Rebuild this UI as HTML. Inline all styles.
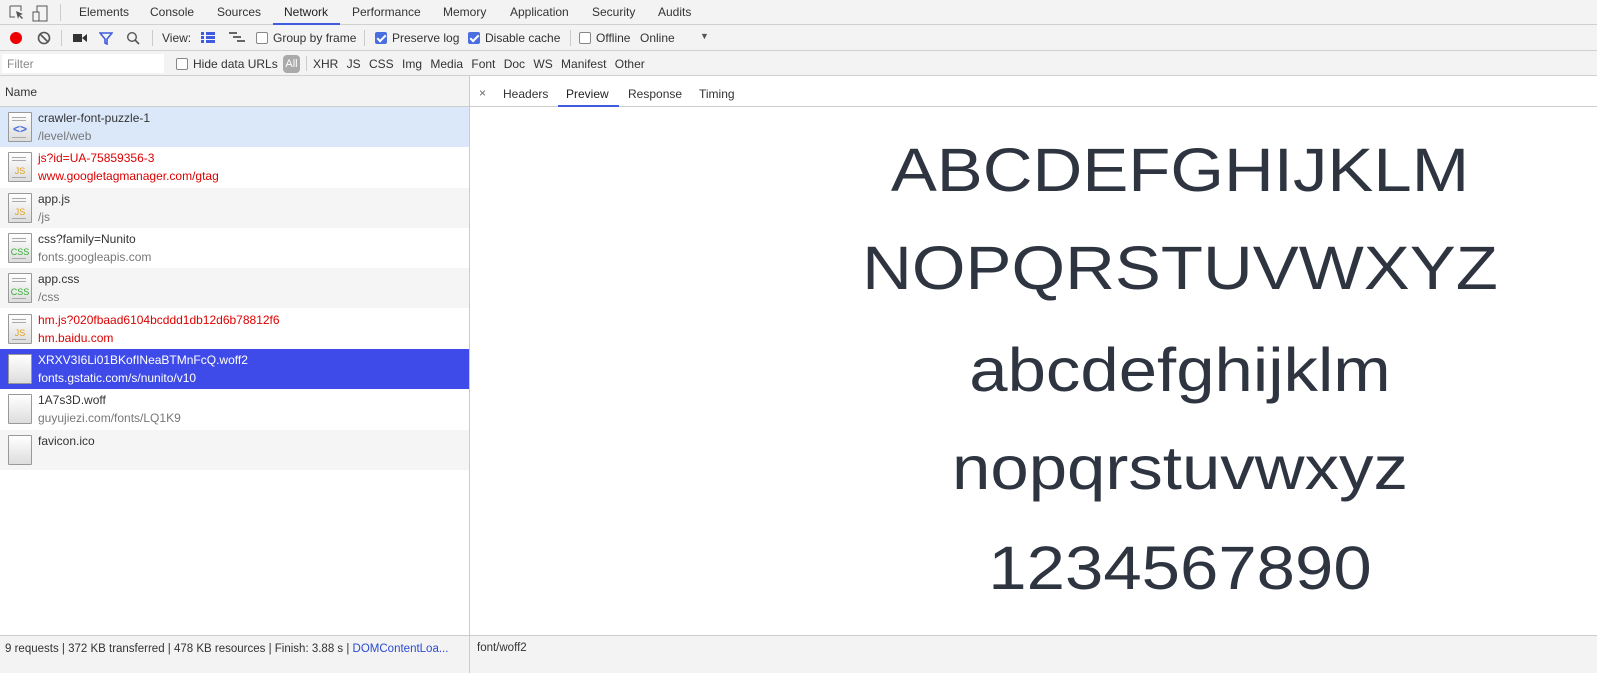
<!DOCTYPE html>
<html><head><meta charset="utf-8"><style>
*{box-sizing:border-box;margin:0;padding:0}
body{width:1597px;height:673px;overflow:hidden;background:#fff;font-family:"Liberation Sans",sans-serif;font-size:12px;color:#333;position:relative}
.a{position:absolute;white-space:nowrap}
.bar{position:absolute;left:0;width:1597px;background:#f3f3f3;border-bottom:1px solid #d0d0d0}
.cb{display:inline-block;width:12px;height:12px;border:1px solid #888;border-radius:2px;background:#fff;vertical-align:-2px;margin-right:5px}
.cb.on{background:#4a6ee0;border-color:#4a6ee0;position:relative}
.cb.on:after{content:"";position:absolute;left:3px;top:0px;width:3px;height:7px;border:solid #fff;border-width:0 2px 2px 0;transform:rotate(45deg)}
.row{position:absolute;left:0;width:469px;height:40px}
.ic{position:absolute;left:8px;top:5px;width:24px;height:30px;border:1px solid #999;background:linear-gradient(#fff,#ddd);border-radius:1px}
.ic i{position:absolute;left:3px;width:14px;height:1px;background:#aaa}
.ic b{position:absolute;left:0;right:0;top:13px;text-align:center;font-size:9px;font-weight:normal}
.n{position:absolute;left:38px;top:4px;font-size:12px}
.d{position:absolute;left:38px;top:22px;font-size:12px;color:#777}
.sep{position:absolute;width:1px;background:#ccc}
.pv{position:absolute;left:470px;width:1420px;text-align:center;font-size:61px;color:#2e3540;transform:scaleX(1.13);transform-origin:710px 0;line-height:1}
</style></head><body>
<div class="bar" style="top:0;height:25px"></div>
<svg class="a" style="left:9px;top:5px" width="16" height="16"><path d="M1 1h11v5M1 1v11h5" stroke="#555" fill="none"/><path d="M7 6l7 3-3 1 3 3-1 1-3-3-1 3z" fill="#555"/></svg>
<svg class="a" style="left:32px;top:4px" width="18" height="18"><rect x="5" y="2" width="10" height="15" stroke="#555" fill="none"/><rect x="1" y="8" width="6" height="9" stroke="#555" fill="#f3f3f3"/></svg>
<div class="sep" style="left:60px;top:4px;height:17px"></div>
<div class="a" style="left:79px;top:5px">Elements</div>
<div class="a" style="left:150px;top:5px">Console</div>
<div class="a" style="left:217px;top:5px">Sources</div>
<div class="a" style="left:284px;top:5px;color:#222">Network</div>
<div class="a" style="left:273px;top:23px;width:67px;height:2px;background:#3f5be0"></div>
<div class="a" style="left:352px;top:5px">Performance</div>
<div class="a" style="left:443px;top:5px">Memory</div>
<div class="a" style="left:510px;top:5px">Application</div>
<div class="a" style="left:592px;top:5px">Security</div>
<div class="a" style="left:658px;top:5px">Audits</div>
<div class="bar" style="top:25px;height:26px"></div>
<div class="a" style="left:10px;top:32px;width:12px;height:12px;border-radius:50%;background:#e00"></div>
<svg class="a" style="left:37px;top:31px" width="14" height="14"><circle cx="7" cy="7" r="5.5" stroke="#555" stroke-width="1.6" fill="none"/><path d="M3 3l8 8" stroke="#555" stroke-width="1.6"/></svg>
<div class="sep" style="left:61px;top:30px;height:16px"></div>
<svg class="a" style="left:73px;top:33px" width="14" height="10"><rect x="0" y="1" width="9" height="8" fill="#333"/><path d="M9 5l5-4v8z" fill="#333"/></svg>
<svg class="a" style="left:99px;top:31px" width="14" height="14"><path d="M1 2h12l-5 6v5l-2-1V8z" fill="none" stroke="#3f5be0" stroke-width="1.6"/></svg>
<svg class="a" style="left:126px;top:31px" width="14" height="14"><circle cx="6" cy="6" r="4.3" stroke="#555" stroke-width="1.4" fill="none"/><path d="M9 9l4 4" stroke="#555" stroke-width="1.6"/></svg>
<div class="sep" style="left:152px;top:30px;height:16px"></div>
<div class="a" style="left:162px;top:31px">View:</div>
<svg class="a" style="left:201px;top:32px" width="14" height="11"><g fill="#3f5be0"><rect x="0" y="0" width="3" height="3"/><rect x="5" y="0" width="9" height="3"/><rect x="0" y="4" width="3" height="3"/><rect x="5" y="4" width="9" height="3"/><rect x="0" y="8" width="3" height="3"/><rect x="5" y="8" width="9" height="3"/></g></svg>
<svg class="a" style="left:229px;top:32px" width="16" height="11"><g fill="#666"><rect x="0" y="0" width="8" height="2"/><rect x="4" y="4" width="8" height="2"/><rect x="8" y="8" width="8" height="2"/></g></svg>
<div class="a" style="left:256px;top:31px"><span class="cb"></span>Group by frame</div>
<div class="sep" style="left:364px;top:30px;height:16px"></div>
<div class="a" style="left:375px;top:31px"><span class="cb on"></span>Preserve log</div>
<div class="a" style="left:468px;top:31px"><span class="cb on"></span>Disable cache</div>
<div class="sep" style="left:570px;top:30px;height:16px"></div>
<div class="a" style="left:579px;top:31px"><span class="cb"></span>Offline</div>
<div class="a" style="left:640px;top:31px">Online</div>
<div class="a" style="left:700px;top:31px;font-size:9px;color:#555">▼</div>
<div class="bar" style="top:51px;height:25px"></div>
<div class="a" style="left:2px;top:54px;width:162px;height:19px;background:#fff"></div>
<div class="a" style="left:7px;top:57px;color:#888">Filter</div>
<div class="a" style="left:176px;top:57px"><span class="cb"></span>Hide data URLs</div>
<div class="a" style="left:283px;top:55px;width:17px;height:18px;border-radius:4px;background:#aaa;color:#fff;text-align:center;line-height:18px;font-size:11px">All</div>
<div class="sep" style="left:306px;top:56px;height:15px"></div>
<div class="a" style="left:313px;top:57px;word-spacing:5px">XHR JS CSS Img Media Font Doc WS Manifest Other</div>
<div class="a" style="left:0;top:76px;width:1597px;height:31px;border-bottom:1px solid #ccc;background:#fff"></div>
<div class="a" style="left:0;top:76px;width:469px;height:31px;background:#f3f3f3;border-bottom:1px solid #ccc"></div>
<div class="a" style="left:5px;top:85px">Name</div>
<div class="a" style="left:479px;top:86px;color:#666">×</div>
<div class="a" style="left:503px;top:87px">Headers</div>
<div class="a" style="left:566px;top:87px;color:#222">Preview</div>
<div class="a" style="left:558px;top:105px;width:61px;height:2px;background:#3f5be0"></div>
<div class="a" style="left:628px;top:87px">Response</div>
<div class="a" style="left:699px;top:87px">Timing</div>
<div class="sep" style="left:469px;top:76px;height:597px;background:#ccc"></div>
<div class="row" style="top:107px;background:#dbe8fa"><div class="ic"><i style="top:4px"></i><i style="top:7px"></i><i style="top:24px"></i><b style="color:#4a6ee0;font-size:12px;font-weight:bold;top:9px">&lt;&gt;</b></div><div class="n">crawler-font-puzzle-1</div><div class="d">/level/web</div></div>
<div class="row" style="top:147px;background:#fff"><div class="ic"><i style="top:4px"></i><i style="top:7px"></i><i style="top:24px"></i><b style="color:#e0a020">JS</b></div><div class="n" style="color:#d00">js?id=UA-75859356-3</div><div class="d" style="color:#d00">www.googletagmanager.com/gtag</div></div>
<div class="row" style="top:188px;background:#f5f5f5"><div class="ic"><i style="top:4px"></i><i style="top:7px"></i><i style="top:24px"></i><b style="color:#e0a020">JS</b></div><div class="n">app.js</div><div class="d">/js</div></div>
<div class="row" style="top:228px;background:#fff"><div class="ic"><i style="top:4px"></i><i style="top:7px"></i><i style="top:24px"></i><b style="color:#3a3">CSS</b></div><div class="n">css?family=Nunito</div><div class="d">fonts.googleapis.com</div></div>
<div class="row" style="top:268px;background:#f5f5f5"><div class="ic"><i style="top:4px"></i><i style="top:7px"></i><i style="top:24px"></i><b style="color:#3a3">CSS</b></div><div class="n">app.css</div><div class="d">/css</div></div>
<div class="row" style="top:309px;background:#fff"><div class="ic"><i style="top:4px"></i><i style="top:7px"></i><i style="top:24px"></i><b style="color:#e0a020">JS</b></div><div class="n" style="color:#d00">hm.js?020fbaad6104bcddd1db12d6b78812f6</div><div class="d" style="color:#d00">hm.baidu.com</div></div>
<div class="row" style="top:349px;background:#3f4be8"><div class="ic"></div><div class="n" style="color:#fff">XRXV3I6Li01BKofINeaBTMnFcQ.woff2</div><div class="d" style="color:#fff">fonts.gstatic.com/s/nunito/v10</div></div>
<div class="row" style="top:389px;background:#fff"><div class="ic"></div><div class="n">1A7s3D.woff</div><div class="d">guyujiezi.com/fonts/LQ1K9</div></div>
<div class="row" style="top:430px;background:#f5f5f5"><div class="ic"></div><div class="n">favicon.ico</div></div>
<div class="pv" style="top:140px">ABCDEFGHIJKLM</div>
<div class="pv" style="top:238px">NOPQRSTUVWXYZ</div>
<div class="pv" style="top:340px">abcdefghijklm</div>
<div class="pv" style="top:438px">nopqrstuvwxyz</div>
<div class="pv" style="top:538px">1234567890</div>
<div class="a" style="left:0;top:635px;width:1597px;height:38px;background:#f3f3f3;border-top:1px solid #ccc"></div>
<div class="sep" style="left:469px;top:635px;height:38px"></div>
<div class="a" style="left:5px;top:643px;font-size:11.5px">9 requests | 372 KB transferred | 478 KB resources | Finish: 3.88 s | <span style="color:#2a4bd0">DOMContentLoa...</span></div>
<div class="a" style="left:477px;top:642px;font-size:11.5px">font/woff2</div>
</body></html>
